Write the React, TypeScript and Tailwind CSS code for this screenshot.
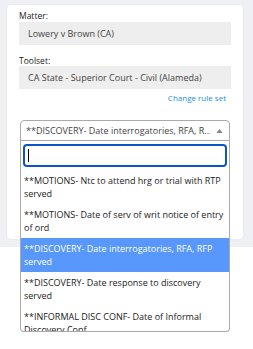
import React from "react";

const options = [
  "**MOTIONS- Ntc to attend hrg or trial with RTP served",
  "**MOTIONS- Date of serv of writ notice of entry of ord",
  "**DISCOVERY- Date interrogatories, RFA, RFP served",
  "**DISCOVERY- Date response to discovery served",
  "**INFORMAL DISC CONF- Date of Informal Discovery Conf",
];

export default function App() {
  const selected = 2;
  return (
    <div
      className="w-[253px] h-[349px] bg-white overflow-hidden"
      style={{ fontFamily: '"Open Sans", "Noto Sans", sans-serif' }}
    >
      <div className="bg-[#eef0f4] pt-[5px] pl-[7px] pr-[10px] pb-[8px]">
        <div className="relative bg-white rounded-[4px] shadow-[0_0_2px_rgba(0,0,0,0.08)] px-[12px] pt-[5px] pb-[98px]">
          <div className="text-[8.5px] leading-[12px] text-[#222]">Matter:</div>
          <div className="h-[23px] bg-[#eeeeee] flex items-center pl-[9px] text-[9px] text-[#444]">
            Lowery v Brown (CA)
          </div>
          <div className="mt-[10px] text-[8.5px] leading-[11px] text-[#222]">Toolset:</div>
          <div className="h-[23px] bg-[#eeeeee] flex items-center pl-[9px] text-[9px] text-[#444]">
            CA State - Superior Court - Civil (Alameda)
          </div>
          <div className="mt-[3px] text-right pr-[5px] text-[8px] leading-[12px] text-[#1a8fe0]">
            Change rule set
          </div>
          <div className="relative mt-[16px] mx-[1px]">
            <div className="h-[21px] border border-[#aaa] rounded-t-[4px] bg-white flex items-center pl-[5px] pr-[6px] text-[9px] text-[#444]">
              <span className="flex-1 whitespace-nowrap overflow-hidden">**DISCOVERY- Date interrogatories, RFA, R...</span>
              <svg width="7" height="4" viewBox="0 0 8 5" className="ml-[6px] shrink-0">
                <path d="M0 5 L4 0 L8 5 Z" fill="#888" />
              </svg>
            </div>
            <div className="absolute left-0 right-0 top-[21px] h-[191px] border border-t-0 border-[#aaa] rounded-b-[4px] bg-white overflow-hidden z-10">
              <div className="px-[2px] pt-[3px] pb-[3px]">
                <div className="h-[23px] border-2 border-[#0a55c8] rounded-[4px] flex items-center pl-[3px]">
                  <div className="w-[1px] h-[13px] bg-black" />
                </div>
              </div>
              <ul>
                {options.map((o, i) => (
                  <li
                    key={o}
                    className={`pl-[3px] pr-[4px] py-[4px] text-[9px] leading-[13px] ${
                      i === selected ? "bg-[#5897fb] text-white" : "text-[#222]"
                    }`}
                  >
                    {o}
                  </li>
                ))}
              </ul>
            </div>
          </div>
        </div>
      </div>
    </div>
  );
}
